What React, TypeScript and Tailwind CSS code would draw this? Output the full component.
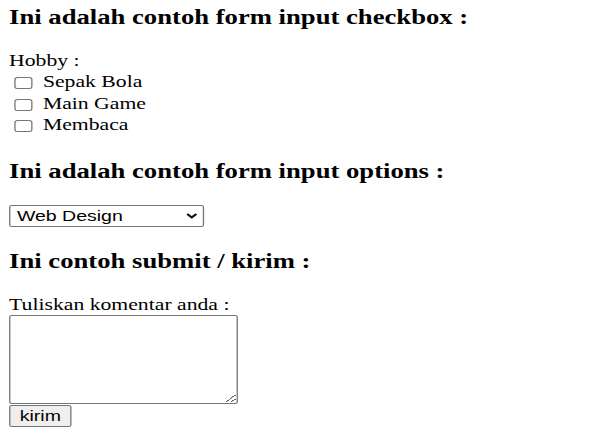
export default function App() {
  const hobbies = ["Sepak Bola", "Main Game", "Membaca"];

  return (
    <div className="w-[600px] h-[433px] overflow-hidden bg-white text-black">
      {/* the reference is stretched sideways, so the whole form is too */}
      <div className="origin-top-left scale-x-[1.3] pl-[7px] font-['Liberation_Serif',serif]">
        <h3 className="mt-[4.5px] text-[20.5px] leading-[24px] font-bold whitespace-nowrap">
          Ini adalah contoh form input checkbox :
        </h3>

        {/* CHECKBOX */}
        <div className="mt-[21px] text-[16.7px] leading-[21.5px]">
          <div>Hobby :</div>
          {hobbies.map((item) => (
            <label key={item} className="flex items-start h-[21.5px] whitespace-nowrap">
              <span className="mt-[6px] ml-[4px] w-[13.5px] h-[12px] border border-[#767676] rounded-[2.5px] bg-white" />
              <span className="ml-[8.5px]">{item}</span>
            </label>
          ))}
        </div>

        <h3 className="mt-[23px] text-[20.5px] leading-[24px] font-bold whitespace-nowrap">
          Ini adalah contoh form input options :
        </h3>

        {/* SELECT */}
        <div className="mt-[22.5px] w-[150px] h-[22px] flex items-center justify-between border border-[#767676] rounded-[2px] pl-[5px] pr-[4.5px] font-['Liberation_Sans',Arial,sans-serif] text-[15px] leading-[20px]">
          <span>Web Design</span>
          <svg width="9" height="6" viewBox="0 0 9 6" fill="none">
            <path d="M1 1L4.5 4.5L8 1" stroke="#111" strokeWidth="1.8" />
          </svg>
        </div>

        <h3 className="mt-[22px] text-[20.5px] leading-[24px] font-bold whitespace-nowrap">
          Ini contoh submit / kirim :
        </h3>

        {/* SUBMIT */}
        <div className="mt-[20.5px] text-[16.7px] leading-[21.5px] whitespace-nowrap">
          Tuliskan komentar anda :
        </div>
        <textarea
          className="block w-[176px] h-[88.5px] border border-[#767676] rounded-[2px] resize"
          defaultValue=""
        />
        <button className="block mt-[1px] w-[48px] h-[22.5px] bg-[#efefef] border border-[#767676] rounded-[2px] font-['Liberation_Sans',Arial,sans-serif] text-[15px] leading-[20px]">
          kirim
        </button>
      </div>
    </div>
  );
}
